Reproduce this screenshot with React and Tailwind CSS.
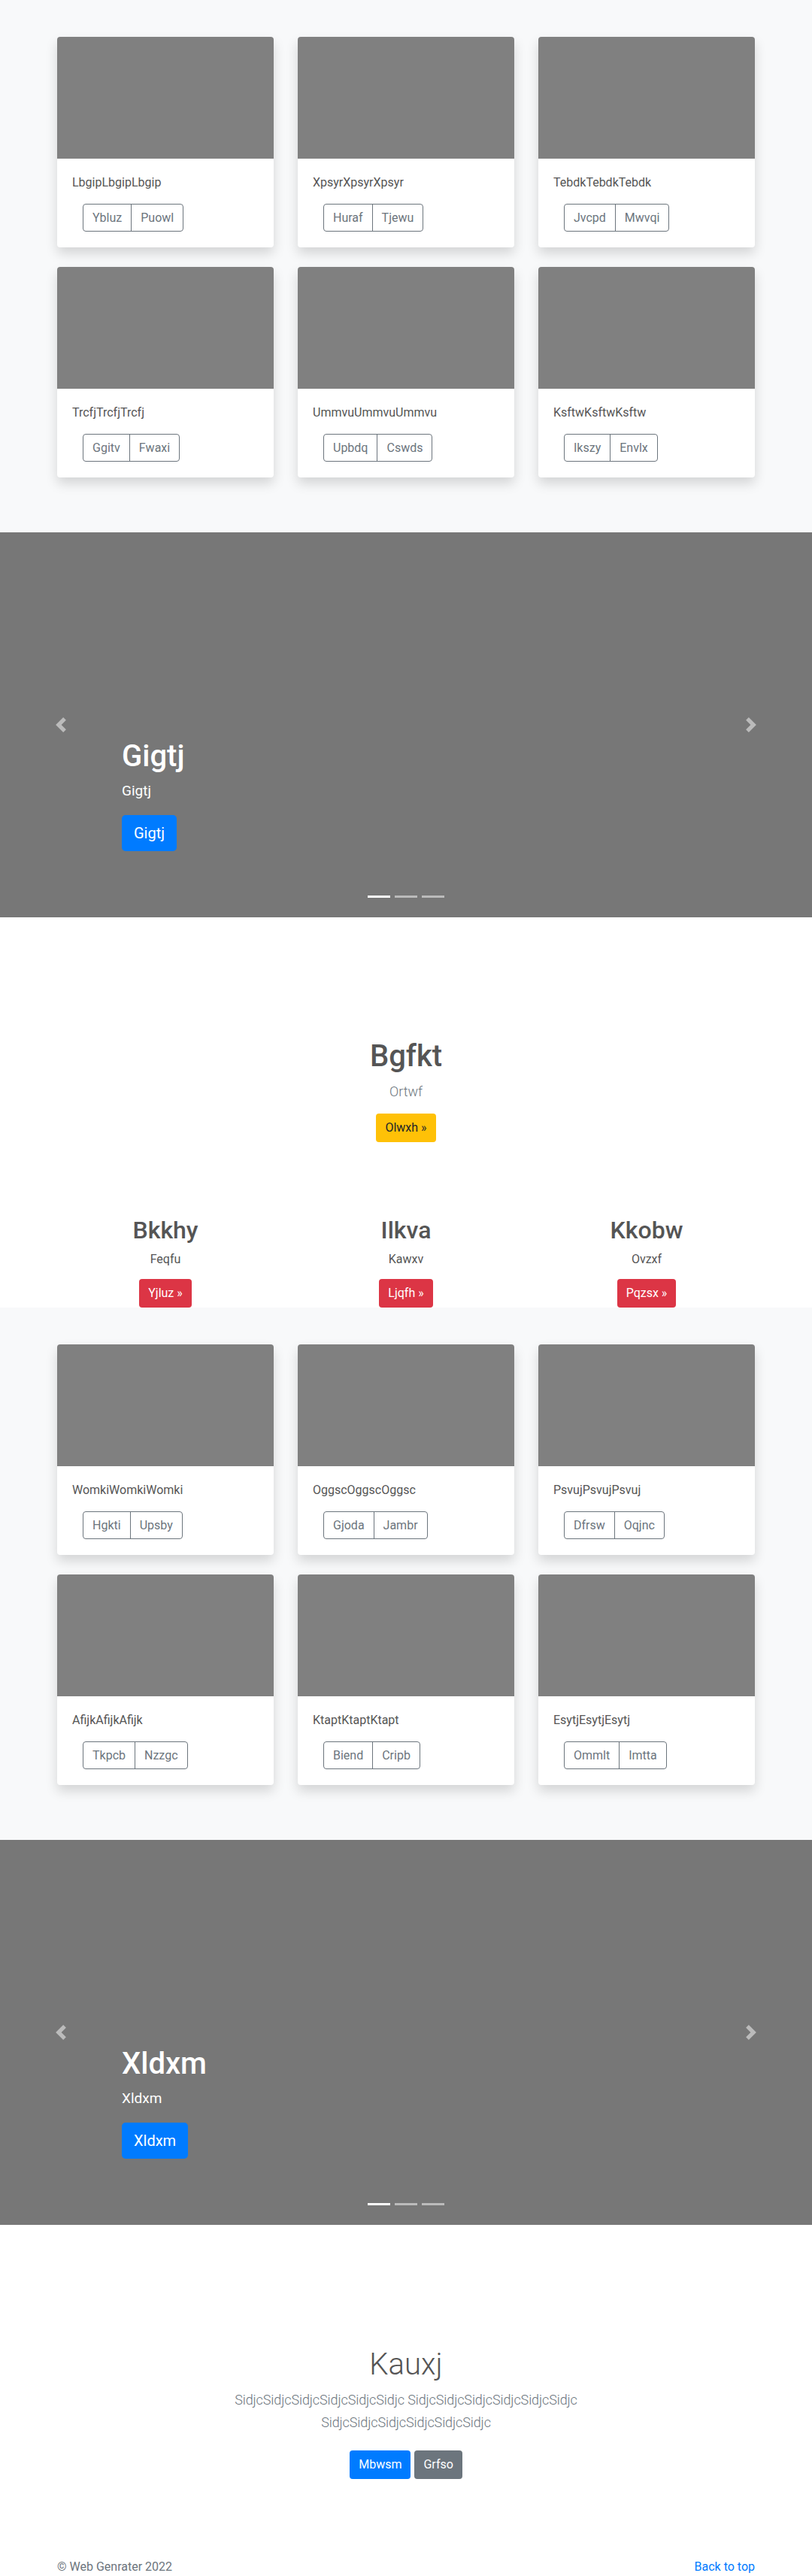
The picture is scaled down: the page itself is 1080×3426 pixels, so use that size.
import React from "react";

const topCards = [
  { title: "LbgipLbgipLbgip", a: "Ybluz", b: "Puowl" },
  { title: "XpsyrXpsyrXpsyr", a: "Huraf", b: "Tjewu" },
  { title: "TebdkTebdkTebdk", a: "Jvcpd", b: "Mwvqi" },
  { title: "TrcfjTrcfjTrcfj", a: "Ggitv", b: "Fwaxi" },
  { title: "UmmvuUmmvuUmmvu", a: "Upbdq", b: "Cswds" },
  { title: "KsftwKsftwKsftw", a: "Ikszy", b: "Envlx" },
];

const bottomCards = [
  { title: "WomkiWomkiWomki", a: "Hgkti", b: "Upsby" },
  { title: "OggscOggscOggsc", a: "Gjoda", b: "Jambr" },
  { title: "PsvujPsvujPsvuj", a: "Dfrsw", b: "Oqjnc" },
  { title: "AfijkAfijkAfijk", a: "Tkpcb", b: "Nzzgc" },
  { title: "KtaptKtaptKtapt", a: "Biend", b: "Cripb" },
  { title: "EsytjEsytjEsytj", a: "Ommlt", b: "Imtta" },
];

const columns = [
  { title: "Bkkhy", text: "Feqfu", btn: "Yjluz »" },
  { title: "Ilkva", text: "Kawxv", btn: "Ljqfh »" },
  { title: "Kkobw", text: "Ovzxf", btn: "Pqzsx »" },
];

function Card({ card }) {
  return (
    <div className="h-[280px] bg-white rounded-[4px] overflow-hidden shadow-[0_8px_16px_rgba(0,0,0,0.15)]">
      <div className="h-[162px] bg-[#808080]" />
      <div className="px-5 pt-5">
        <p className="text-[16px] leading-6 text-[#555]">{card.title}</p>
        <div className="mt-4 ml-[14px] inline-flex h-[37px] border border-[#6c757d] rounded-[4px] divide-x divide-[#6c757d] text-[16px] text-[#6c757d]">
          <button className="px-3">{card.a}</button>
          <button className="px-3">{card.b}</button>
        </div>
      </div>
    </div>
  );
}

function CardSection({ cards }) {
  return (
    <section className="bg-[#f8f9fa] pt-[49px] pb-[73px]">
      <div className="max-w-[960px] mx-auto px-4 grid grid-cols-3 gap-x-8 gap-y-[26px]">
        {cards.map((card, i) => (
          <Card key={i} card={card} />
        ))}
      </div>
    </section>
  );
}

function Chevron({ flip }) {
  return (
    <svg width="20" height="20" viewBox="0 0 8 8" fill="#fff" className={flip ? "rotate-180" : ""}>
      <path d="M5.25 0l-4 4 4 4 1.5-1.5L4.25 4l2.5-2.5L5.25 0z" />
    </svg>
  );
}

function Carousel({ label }) {
  return (
    <section className="relative h-[512px] bg-[#777] flex flex-col justify-end px-[162px] pb-[88px] text-white">
      <h1 className="text-[40px] leading-[48px] font-medium mb-2">{label}</h1>
      <p className="text-[19px] leading-[28px] mb-[18px]">{label}</p>
      <div>
        <button className="h-12 px-4 rounded-[5px] bg-[#007bff] text-[20px]">{label}</button>
      </div>

      {/* controls + indicators sit over the slide */}
      <div className="absolute left-[71px] top-[246px] opacity-50">
        <Chevron />
      </div>
      <div className="absolute right-[71px] top-[246px] opacity-50">
        <Chevron flip />
      </div>
      <div className="absolute bottom-[26px] left-1/2 -translate-x-1/2 flex gap-[6px]">
        <span className="w-[30px] h-[3px] bg-white" />
        <span className="w-[30px] h-[3px] bg-white/50" />
        <span className="w-[30px] h-[3px] bg-white/50" />
      </div>
    </section>
  );
}

function Marketing() {
  return (
    <section className="bg-white pt-[161px] text-center">
      <h1 className="text-[40px] leading-[48px] font-medium text-[#555] mb-2">Bgfkt</h1>
      <p className="text-[18px] leading-[30px] font-light text-[#6c757d] mb-[14px]">Ortwf</p>
      <button className="h-[38px] px-3 rounded-[4px] bg-[#ffc107] text-[#212529] text-[16px]">Olwxh »</button>

      <div className="max-w-[960px] mx-auto grid grid-cols-3 mt-[98px]">
        {columns.map((col) => (
          <div key={col.title} className="flex flex-col items-center">
            <h2 className="text-[32px] leading-[38px] font-medium text-[#555] mb-2">{col.title}</h2>
            <p className="text-[16px] leading-6 text-[#555] mb-[14px]">{col.text}</p>
            <button className="h-[38px] px-3 rounded-[4px] bg-[#dc3545] text-white text-[16px]">{col.btn}</button>
          </div>
        ))}
      </div>
    </section>
  );
}

export default function App() {
  return (
    <div className="font-['Roboto',sans-serif] w-[1080px]">
      <CardSection cards={topCards} />
      <Carousel label="Gigtj" />
      <Marketing />
      <CardSection cards={bottomCards} />
      <Carousel label="Xldxm" />

      <section className="bg-white pt-[162px] text-center">
        <h1 className="text-[40px] leading-[48px] font-light text-[#555] mb-2">Kauxj</h1>
        <p className="max-w-[610px] mx-auto text-[18px] tracking-[-0.1px] leading-[30px] font-light text-[#6c757d] mb-[22px]">
          SidjcSidjcSidjcSidjcSidjcSidjc SidjcSidjcSidjcSidjcSidjcSidjc SidjcSidjcSidjcSidjcSidjcSidjc
        </p>
        <div className="flex justify-center gap-[5px]">
          <button className="h-[38px] px-3 rounded-[4px] bg-[#007bff] text-white text-[16px]">Mbwsm</button>
          <button className="h-[38px] px-3 rounded-[4px] bg-[#6c757d] text-white text-[16px]">Grfso</button>
        </div>
      </section>

      <footer className="max-w-[960px] mx-auto px-4 mt-[105px] flex justify-between text-[16px] leading-[23px]">
        <p className="text-[#6c757d]">© Web Genrater 2022</p>
        <a href="#" className="text-[#007bff]">Back to top</a>
      </footer>
    </div>
  );
}
